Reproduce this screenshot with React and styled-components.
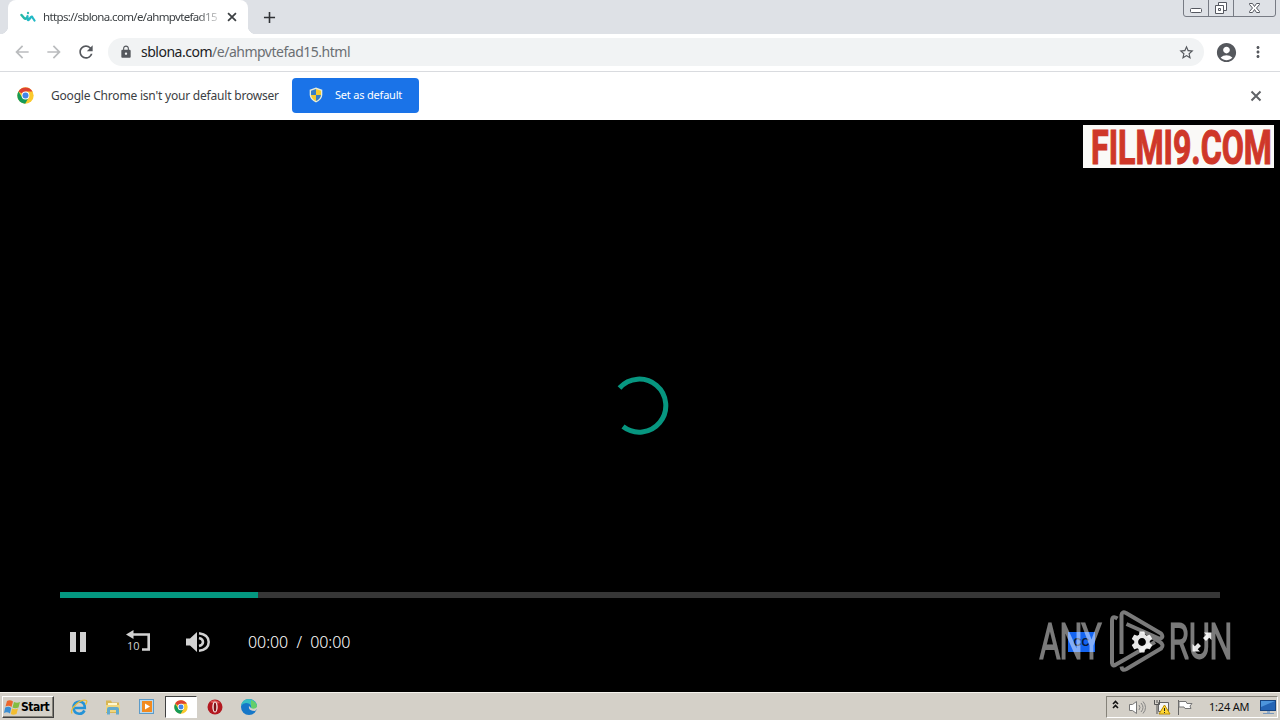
import styled, { createGlobalStyle } from "styled-components";
import {
  MdAccountCircle,
  MdAdd,
  MdArrowBack,
  MdArrowForward,
  MdLock,
  MdMoreVert,
  MdRefresh,
  MdSettings,
  MdStarBorder,
} from "react-icons/md";

const ChromeLogo = ({ size }) => (
  <svg width={size} height={size} viewBox="0 0 48 48">
    <circle cx="24" cy="24" r="23" fill="#fbc92d" />
    <path d="M24 24 L4 12.5 A23 23 0 0 1 44 13 L24 13Z" fill="#dd4132" />
    <path d="M4 12.5 A23 23 0 0 0 23 47 L33.5 29 L24 34 L14.5 29Z" fill="#159b58" />
    <circle cx="24" cy="24" r="11" fill="#fff" />
    <circle cx="24" cy="24" r="8.5" fill="#4285e8" />
  </svg>
);

const CloseIcon = ({ size }) => (
  <svg width={size} height={size} viewBox="0 0 16 16">
    <path d="M3.500 3.500 12.500 12.500M12.500 3.500 3.500 12.500" fill="none" stroke="currentColor" strokeWidth="2" />
  </svg>
);

const SiteIcon = () => (
  <svg width="16" height="16" viewBox="0 0 16 16" fill="none" strokeLinecap="round" strokeLinejoin="round">
    <path d="M1.500 6 4.500 9.500Q5.500 10.500 7 8.500" stroke="#25b8a8" strokeWidth="2.400" />
    <path d="M7.500 7V10.500Q8 12 9.500 10L11 8Q12 7 12.500 8.500L14.500 11.500" stroke="#22b9c5" strokeWidth="2.200" />
    <circle cx="8" cy="4" r="1.200" fill="#36bcb2" />
  </svg>
);

const ShieldIcon = () => (
  <svg width="16" height="16" viewBox="0 0 16 16">
    <path d="M8 .5 14.300 2.700V8Q14 13 8 15.500 2 13 1.700 8V2.700Z" fill="#e8edda" />
    <path d="M8 2V8H3V3.700Z M8 8h5q-.5 4-5 6Z" fill="#367fc5" />
    <path d="M8 2 13 3.700V8H8Z M8 8v6Q3.500 12 3 8Z" fill="#f5cb2d" />
  </svg>
);

const WindowButtons = () => (
  <svg width="94" height="18" viewBox="0 0 94 18" fill="none" stroke="#777b84">
    <path d="M.5 0V14Q.5 16.500 3 16.500H90Q92.500 16.500 92.500 14V0M25.500 0V16.500M50.500 0V16.500" />
    <g stroke="#555860">
      <rect x="7.500" y="8.500" width="11" height="4" rx="1" fill="#fff" />
      <path d="M35.500 5V2.500H43.500V10.500H41M32.500 5.500H40.500V13.500H32.500ZM35.500 8.500H37.500V10.500H35.500Z" fill="#fff" />
      <path d="M66.500 3.500h3l2 3 2-3h3v1l-3 3.500 3 3.500v1h-3l-2-3-2 3h-3v-1l3-3.500-3-3.500Z" fill="#fff" />
    </g>
  </svg>
);

const RewindIcon = () => (
  <svg width="26" height="24" viewBox="0 0 26 24">
    <path d="M7 4.500H22.700V19.500H16" fill="none" stroke="#d2d2d2" strokeWidth="2.600" />
    <path d="M0 4.500 7.500 0V9Z" fill="#d2d2d2" />
    <text x="1" y="20" fill="#d2d2d2" fontFamily="Open Sans, sans-serif" fontSize="11">10</text>
  </svg>
);

const VolumeIcon = () => (
  <svg width="26" height="24" viewBox="0 0 26 24" fill="none" stroke="#d2d2d2" strokeWidth="2.500">
    <path d="M1 8.500H5L12 2V22L5 15.500H1Z" fill="#d2d2d2" stroke="none" />
    <path d="M14 8Q18 9 18 12T14 16M14 3.200Q23.700 4.500 23.700 12T14 20.800" />
  </svg>
);

const FullscreenIcon = () => (
  <svg width="22" height="22" viewBox="0 0 22 22" fill="#e6e6e6">
    <path d="M13 1.500H20.500V9L18.200 6.700 15 10 12 7 15.300 3.800ZM1.500 13V20.500H9L6.700 18.200 10 15 7 12 3.800 15.300Z" />
  </svg>
);

const AnyRunMark = () => (
  <svg width="196" height="64" viewBox="0 0 196 64">
    <g fill="#fff" stroke="#fff" strokeWidth="2.800" fontFamily="Roboto, sans-serif" fontSize="48" fontWeight="300">
      <text x="2" y="48.500" textLength="61" lengthAdjust="spacingAndGlyphs">ANY</text>
      <text x="131" y="48.500" textLength="63" lengthAdjust="spacingAndGlyphs">RUN</text>
    </g>
    <g fill="none" stroke="#fff" strokeWidth="4" strokeLinejoin="round">
      <path d="M79.500 9.500Q74 6 74 12V54Q74.500 58 78 55.500L117 33" />
      <path d="M83.500 45V6Q84 2 88 4L123 24.500Q126.500 29 121 29.500L88.500 15" />
      <path d="M83.500 57.500Q84 62.500 88.500 60L123 39.500Q126.500 36 122 33L110 26" />
    </g>
  </svg>
);

const StartFlag = () => (
  <svg width="17" height="17" viewBox="0 0 17 17">
    <path d="M3 2Q6 .5 9 2.500L7.500 8Q5 6 1.500 7.500Z" fill="#ed672c" />
    <path d="M10 3Q13 4.500 16 3L14.500 8.500Q11 10 8.500 8.500Z" fill="#83bd42" />
    <path d="M1.200 8.500Q5 7 7.200 9L6 14.500Q3 12.500 0 14Z" fill="#3b8ed3" />
    <path d="M8 9.500Q11 11 14 9.500L12.500 15Q9 16.500 6.800 15Z" fill="#f3bd30" />
  </svg>
);

const ExplorerIcon = () => (
  <svg width="18" height="18" viewBox="0 0 18 18" fill="none">
    <path d="M14.500 12.500Q12.500 16 9 15.700 3.500 15 3.500 9.500 3.800 4 9.500 3.500 15 4 14.800 10H5" stroke="#2493d7" strokeWidth="2.600" />
    <path d="M2 15.500Q0 12 6 6.500T16.500 2.500Q17.500 4 15.500 6.500" stroke="#e9bd3b" strokeWidth="1.300" />
  </svg>
);

const FolderIcon = () => (
  <svg width="18" height="18" viewBox="0 0 18 18">
    <path d="M2 2.500H7L8 4.500H15V15H2Z" fill="#d9b652" />
    <path d="M4 5H13V8H4Z" fill="#fff8cf" />
    <path d="M2 7H16V14H2Z" fill="#f0d67e" />
    <path d="M3 16.500V11Q3 9 5 9H13Q15 9 15 11V16.500H12V12H6V16.500Z" fill="#62aacd" />
  </svg>
);

const MediaIcon = () => (
  <svg width="18" height="18" viewBox="0 0 18 18">
    <rect x="1.500" y="1.500" width="14" height="14" fill="#b8d9ef" stroke="#5d9bc8" />
    <rect x="4" y="3" width="10" height="11" fill="#f28b21" />
    <circle cx="9" cy="8.500" r="5" fill="#f28b21" />
    <path d="M7 5.500V11.500L12 8.500Z" fill="#fff" />
  </svg>
);

const OperaIcon = () => (
  <svg width="16" height="16" viewBox="0 0 16 16">
    <circle cx="8" cy="8" r="7.500" fill="#b31820" />
    <path d="M3 3Q8-1 13 4L8 5Z" fill="#df5a5a" />
    <ellipse cx="8" cy="8" rx="2.700" ry="5.500" fill="#f6e7e5" />
    <ellipse cx="8" cy="8" rx="1.300" ry="4.500" fill="#7d1218" />
  </svg>
);

const EdgeIcon = () => (
  <svg width="18" height="18" viewBox="0 0 18 18">
    <circle cx="9" cy="9" r="8" fill="#1677c8" />
    <path d="M1 8Q2 1 9 1 17 2 17 9 16 12 12 11 10 10 11 8 10 5 6 5 3 5 1 8Z" fill="#37bfc3" />
    <path d="M11 2Q17 4 17 9 16 12 12 11L11 8Z" fill="#65ce69" />
    <path d="M9 8Q8 13 15 13L17 11V9Q14 12 11 10Z" fill="#d5d1cb" />
  </svg>
);

const TrayIcons = () => (
  <svg width="86" height="20" viewBox="0 0 86 20" fill="none">
    <path d="M2 7 4.500 4.500 7 7M2 11 4.500 8.500 7 11" stroke="#111" strokeWidth="1.600" />
    <path d="M18.500 7.500H21.500L25.500 4.500V16.500L21.500 13.500H18.500Z" fill="#fff" stroke="#777" />
    <path d="M28 8Q30 10.500 28 13M30 6Q34 10.500 30 15M32 4.500Q37 10.500 32 16.500" stroke="#858585" />
    <path d="M47.500 5.500H57.500V14.500H47.500Z" fill="#f5f5f5" stroke="#666" />
    <path d="M43.500 3V7.500H48.500V3M46 3V6M46 7.500V17" stroke="#555" />
    <path d="M53.500 8 59 17H48Z" fill="#ffd735" stroke="#b98b00" />
    <path d="M53.500 11V14M53.500 15V16" stroke="#222" />
    <path d="M67.500 3V18" stroke="#666" />
    <path d="M68 4.500H75L76 6.500H81L79 9 80 11.500H74L73 10H68Z" fill="#fff" stroke="#777" />
  </svg>
);

const DesktopIcon = () => (
  <svg width="16" height="16" viewBox="0 0 16 16">
    <rect x=".5" y="1.500" width="15" height="10" fill="#2464b5" stroke="#174481" />
    <path d="M1 2H15L1 8Z" fill="#4d95dc" />
    <path d="M7 12h3v2H7Z" fill="#91acc9" />
    <path d="M3 14.500H14" stroke="#7898bc" />
  </svg>
);

const App = () => {
  return (
    <Screen>
      <GlobalStyle />
      <TabStrip>
        <Tab>
          <SiteIcon />
          <TabTitle>https://sblona.com/e/ahmpvtefad15</TabTitle>
          <CloseIcon size={14} />
        </Tab>
        <NewTab><MdAdd size={19} /></NewTab>
        <WindowButtons />
      </TabStrip>
      <Toolbar>
        <NavButton $disabled><MdArrowBack size={20} /></NavButton>
        <NavButton $disabled><MdArrowForward size={20} /></NavButton>
        <NavButton><MdRefresh size={20} /></NavButton>
        <AddressBar>
          <MdLock size={14} />
          <Url><strong>sblona.com</strong>/e/ahmpvtefad15.html</Url>
          <MdStarBorder size={17} />
        </AddressBar>
        <Profile><MdAccountCircle size={23} /></Profile>
        <MdMoreVert size={18} />
      </Toolbar>
      <InfoBar>
        <ChromeLogo size={17} />
        <Notice>Google Chrome isn't your default browser</Notice>
        <DefaultButton>
          <ShieldIcon />
          <span>Set as default</span>
        </DefaultButton>
        <Dismiss><CloseIcon size={16} /></Dismiss>
      </InfoBar>
      <Player>
        <SiteBanner>
          <svg width="191" height="43" viewBox="0 0 191 43">
            <text
              x="8" y="38.500" textLength="181" lengthAdjust="spacingAndGlyphs"
              fill="#cf3729" stroke="#cf3729" strokeWidth="1.200"
              fontFamily="Roboto, sans-serif" fontSize="49" fontWeight="700"
            >
              FILMI9.COM
            </text>
          </svg>
        </SiteBanner>
        <Loader>
          <svg width="60" height="60" viewBox="0 0 60 60">
            <path d="M8.500 12A26.500 26.500 0 1 1 12 50.500" fill="none" stroke="#079680" strokeWidth="5" />
          </svg>
        </Loader>
        <Progress><Played /></Progress>
        <Controls>
          <PauseIcon />
          <RewindIcon />
          <VolumeIcon />
          <Time>00:00&nbsp; /&nbsp; 00:00</Time>
          <Captions>CC</Captions>
          <MdSettings size={26} />
          <FullscreenIcon />
        </Controls>
        <Watermark><AnyRunMark /></Watermark>
      </Player>
      <Taskbar>
        <StartButton><StartFlag />Start</StartButton>
        <TaskItem><ExplorerIcon /></TaskItem>
        <TaskItem><FolderIcon /></TaskItem>
        <TaskItem><MediaIcon /></TaskItem>
        <TaskItem $active><ChromeLogo size={14} /></TaskItem>
        <TaskItem><OperaIcon /></TaskItem>
        <TaskItem><EdgeIcon /></TaskItem>
        <Tray>
          <TrayIcons />
          <Clock>1:24 AM</Clock>
          <DesktopIcon />
        </Tray>
      </Taskbar>
    </Screen>
  );
};
export default App;

const GlobalStyle = createGlobalStyle`
  * {
    box-sizing: border-box;
  }
  body {
    margin: 0;
    overflow: hidden;
  }
  svg {
    display: block;
    flex-shrink: 0;
  }
`;

const Screen = styled.div`
  width: 1280px;
  height: 720px;
  display: flex;
  flex-direction: column;
  font-family: "Noto Sans", sans-serif;
  background: #000;
`;

const TabStrip = styled.header`
  height: 34px;
  display: flex;
  padding: 0 3px 0 8px;
  background: #dee1e6;

  > svg {
    margin-left: auto;
  }
`;

const Tab = styled.div`
  width: 240px;
  display: flex;
  align-items: center;
  padding: 0 9px 0 12px;
  position: relative;
  color: #3c4043;
  background: #fff;
  border-radius: 8px 8px 0 0;

  &::before,
  &::after {
    content: "";
    position: absolute;
    bottom: 0;
    width: 8px;
    height: 8px;
  }
  &::before {
    left: -8px;
    background: radial-gradient(circle at 0 0, transparent 8px, #fff 8.5px);
  }
  &::after {
    right: -8px;
    background: radial-gradient(circle at 100% 0, transparent 8px, #fff 8.5px);
  }
`;

const TabTitle = styled.span`
  width: 175px;
  margin: 0 7px;
  padding-bottom: 1px;
  overflow: hidden;
  white-space: nowrap;
  font-size: 11.5px;
  letter-spacing: -0.65px;
  mask-image: linear-gradient(90deg, #000 88%, rgba(0, 0, 0, 0.2));
`;

const NewTab = styled.div`
  display: flex;
  align-items: center;
  margin-left: 12px;
  color: #303236;
`;

const Toolbar = styled.div`
  height: 38px;
  display: flex;
  align-items: center;
  padding: 0 12px 1px 12px;
  color: #55585d;
  background: #fff;
  border-bottom: 1px solid #d9dbdf;
`;

const NavButton = styled.div`
  margin-right: 12px;
  color: ${({ $disabled }) => ($disabled ? "#babcbe" : "#55585d")};
`;

const AddressBar = styled.div`
  width: 1096px;
  height: 28px;
  display: flex;
  align-items: center;
  padding: 0 9px 0 11px;
  background: #f1f3f4;
  border-radius: 14px;

  > svg:last-child {
    margin-left: auto;
  }
`;

const Url = styled.span`
  margin-left: 8px;
  padding-bottom: 2px;
  color: #6b6f73;
  font-size: 14px;
  letter-spacing: -0.49px;

  strong {
    color: #202124;
    font-weight: 400;
  }
`;

const Profile = styled.div`
  margin: 0 11px;
`;

const InfoBar = styled.div`
  height: 48px;
  display: flex;
  align-items: center;
  padding: 0 16px 1px 17px;
  background: #fff;
`;

const Notice = styled.span`
  width: 241px;
  margin-left: 17px;
  color: #3c4043;
  font-size: 12px;
  letter-spacing: -0.2px;
  white-space: nowrap;
`;

const DefaultButton = styled.button`
  width: 127px;
  height: 35px;
  display: flex;
  align-items: center;
  gap: 11px;
  padding: 0 16px 2px;
  border: 0;
  border-radius: 4px;
  color: #fff;
  background: #1a73e8;
  font: 11px "Noto Sans", sans-serif;
  letter-spacing: -0.2px;
  white-space: nowrap;
`;

const Dismiss = styled.div`
  margin-left: auto;
  color: #606367;
`;

const Player = styled.main`
  height: 572px;
  position: relative;
  padding: 472px 60px 0;
  background: #000;
`;

const SiteBanner = styled.div`
  position: absolute;
  top: 5px;
  right: 6px;
  background: #faf9f7;
`;

const Loader = styled.div`
  position: absolute;
  top: 256px;
  left: 611px;
`;

const Progress = styled.div`
  height: 6px;
  background: #363636;
`;

const Played = styled.div`
  width: 198px;
  height: 6px;
  background: #049780;
`;

const Controls = styled.div`
  height: 88px;
  display: flex;
  align-items: center;
  padding: 0 7px 0 10px;
  color: #e6e6e6;

  > svg:nth-child(2) {
    margin-left: 40px;
  }
  > svg:nth-child(3) {
    margin-left: 33px;
  }
`;

const PauseIcon = styled.div`
  width: 16px;
  height: 20px;
  border: solid #d2d2d2;
  border-width: 0 6px;
`;

const Time = styled.span`
  width: 120px;
  margin-left: 37px;
  color: #fff;
  font-size: 16px;
  font-weight: 300;
  letter-spacing: -0.05px;
  white-space: nowrap;
`;

const Captions = styled.span`
  width: 27px;
  height: 20px;
  margin: 0 34px 0 auto;
  color: #081838;
  background: #1464f0;
  font: bold 11px/20px "Liberation Sans", sans-serif;
  text-align: center;

  ~ svg:last-child {
    margin-left: 36px;
  }
`;

const Watermark = styled.div`
  position: absolute;
  top: 489px;
  left: 1038px;
  opacity: 0.48;
`;

const Taskbar = styled.footer`
  height: 28px;
  display: flex;
  align-items: center;
  padding: 1px 2px 0;
  background: #d4d0c8;
  border-top: 1px solid #f4f2ec;
`;

const StartButton = styled.button`
  width: 52px;
  height: 22px;
  display: flex;
  align-items: center;
  margin-right: 9px;
  padding: 0 1px;
  border: 1px solid;
  border-color: #fff #404040 #404040 #fff;
  box-shadow: inset -1px -1px #858279;
  background: #d4d0c8;
  font: bold 12px "DejaVu Sans Condensed", "DejaVu Sans", sans-serif;
  letter-spacing: -0.5px;
`;

const TaskItem = styled.div`
  width: 32px;
  height: 22px;
  display: grid;
  place-items: center;
  margin-right: 2px;
  background: ${({ $active }) => ($active ? "#fff" : "transparent")};
  border: 1px solid transparent;
  border-color: ${({ $active }) => ($active ? "#404040 #fff #fff #404040" : "transparent")};
`;

const Tray = styled.div`
  width: 172px;
  height: 22px;
  display: flex;
  align-items: center;
  margin-left: auto;
  padding: 0 1px 0 4px;
  border: 1px solid;
  border-color: #858279 #fff #fff #858279;
`;

const Clock = styled.span`
  width: 51px;
  margin-left: 12px;
  padding-bottom: 1px;
  color: #111;
  font-size: 11px;
  letter-spacing: -0.2px;
  white-space: nowrap;
`;
